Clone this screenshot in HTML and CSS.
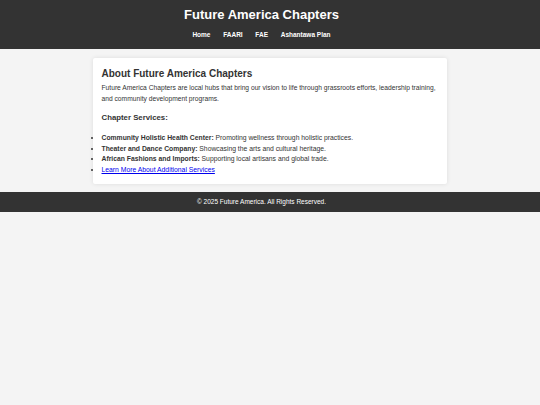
FILE: index.html
```html
<!DOCTYPE html>
<html lang="en">
<head>
<meta charset="utf-8">
<title>Future America Chapters</title>
<link rel="stylesheet" href="styles.css">
</head>
<body>
<header class="site-header">
  <h1 class="site-title">Future America Chapters</h1>
  <nav class="site-nav">
    <a href="#">Home</a>
    <a href="#">FAARI</a>
    <a href="#">FAE</a>
    <a href="#">Ashantawa Plan</a>
  </nav>
</header>
<main class="content">
  <section class="card">
    <h2 class="card-title">About Future America Chapters</h2>
    <p class="card-text">Future America Chapters are local hubs that bring our vision to life through grassroots efforts, leadership training, and community development programs.</p>
    <h3 class="card-subtitle">Chapter Services:</h3>
    <ul class="service-list">
      <li><strong>Community Holistic Health Center:</strong> Promoting wellness through holistic practices.</li>
      <li><strong>Theater and Dance Company:</strong> Showcasing the arts and cultural heritage.</li>
      <li><strong>African Fashions and Imports:</strong> Supporting local artisans and global trade.</li>
      <li><a class="service-link" href="#">Learn More About Additional Services</a></li>
    </ul>
  </section>
</main>
<footer class="site-footer">
  <p class="footer-text">&copy; 2025 Future America. All Rights Reserved.</p>
</footer>
</body>
</html>
```

FILE: styles.css
```css
html, body {
  margin: 0;
  padding: 0;
}

body {
  background: #f4f4f4;
  color: #333;
  font-family: "Liberation Sans", Arial, sans-serif;
}

.site-header {
  background: #333;
  color: #fff;
  text-align: center;
  padding: 7.3px 17px 10.5px 0;
}

.site-title {
  margin: 0 0 8.4px;
  font-size: 13px;
  line-height: 15px;
  font-weight: bold;
}

.site-nav {
  display: flex;
  justify-content: center;
  gap: 12.7px;
  font-size: 6.5px;
  line-height: 8px;
  font-weight: bold;
}

.site-nav a {
  color: #fff;
  text-decoration: none;
}

.content {
  padding: 9px 0 8px;
}

.card {
  width: 354px;
  box-sizing: border-box;
  margin: 0 auto;
  background: #fff;
  padding: 10px 8.5px 8.5px;
  border-radius: 2px;
  box-shadow: 0 0 4px rgba(0, 0, 0, 0.1);
}

.card-title {
  margin: 0;
  font-size: 10px;
  line-height: 12px;
  font-weight: bold;
}

.card-text {
  margin: 2.7px 0 0;
  font-size: 6.7px;
  line-height: 10.7px;
}

.card-subtitle {
  margin: 8.8px 0 0;
  font-size: 7.8px;
  line-height: 10px;
  font-weight: bold;
}

.service-list {
  margin: 9.8px 0 0;
  padding: 0;
  font-size: 6.8px;
  line-height: 10.7px;
}

.service-link {
  color: #0000ee;
  text-decoration: underline;
}

.site-footer {
  background: #333;
  color: #fff;
  height: 19.4px;
  padding-right: 17px;
  display: flex;
  align-items: center;
  justify-content: center;
}

.footer-text {
  margin: 0;
  font-size: 6.5px;
  line-height: 8px;
}
```
